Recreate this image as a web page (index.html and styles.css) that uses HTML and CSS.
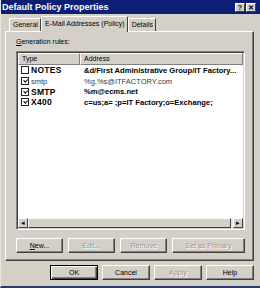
FILE: index.html
```html
<!DOCTYPE html>
<html>
<head>
<meta charset="utf-8">
<link rel="stylesheet" href="styles.css">
</head>
<body>
<div class="window">
  <div class="titlebar">
    <span class="title">Default Policy Properties</span>
    <div class="caption-btns">
      <span class="cbtn">?</span>
      <span class="cbtn">&#x2715;</span>
    </div>
  </div>
  <div class="client">
    <div class="tabs">
      <span class="tab">General</span>
      <span class="tab active">E-Mail Addresses (Policy)</span>
      <span class="tab">Details</span>
    </div>
    <div class="panel">
      <div class="label"><u>G</u>eneration rules:</div>
      <div class="listbox">
        <div class="header">
          <span class="hcol type">Type</span>
          <span class="hcol addr">Address</span>
        </div>
        <div class="rows">
          <div class="row bold">
            <span class="cell type"><span class="chk"></span>NOTES</span>
            <span class="cell addr">&amp;d/First Administrative Group/IT Factory...</span>
          </div>
          <div class="row normal">
            <span class="cell type"><span class="chk on"></span>smtp</span>
            <span class="cell addr">%g.%s@ITFACTORY.com</span>
          </div>
          <div class="row bold">
            <span class="cell type"><span class="chk on"></span>SMTP</span>
            <span class="cell addr">%m@ecms.net</span>
          </div>
          <div class="row bold">
            <span class="cell type"><span class="chk on"></span>X400</span>
            <span class="cell addr">c=us;a= ;p=IT Factory;o=Exchange;</span>
          </div>
        </div>
        <div class="hscroll">
          <span class="sbtn">&#9666;</span>
          <span class="thumb"></span>
          <span class="sbtn">&#9656;</span>
        </div>
      </div>
      <div class="actions">
        <span class="btn w47"><u>N</u>ew...</span>
        <span class="btn w47 disabled">Edit...</span>
        <span class="btn w47 disabled">Remove</span>
        <span class="btn w73 disabled">Set as Primary</span>
      </div>
    </div>
    <div class="footer">
      <span class="btn fb default">OK</span>
      <span class="btn fb">Cancel</span>
      <span class="btn fb disabled">Apply</span>
      <span class="btn fb">Help</span>
    </div>
  </div>
</div>
</body>
</html>
```
FILE: styles.css
```css
* { box-sizing: border-box; }
html, body { margin: 0; padding: 0; background: #d4d0c8; }
.window {
  width: 260px;
  height: 288px;
  background: #d4d0c8;
  font-family: "Liberation Sans", Arial, sans-serif;
  font-size: 7px;
  color: #000;
  border-left: 1px solid #e8e6e0;
  border-bottom: 2px solid #2d3a66;
  overflow: hidden;
}
.titlebar {
  height: 14px;
  background: #0c1f74;
  display: flex;
  align-items: center;
  justify-content: space-between;
  padding: 0 4px 0 1px;
}
.title {
  color: #fff;
  font-weight: bold;
  font-size: 9px;
}
.caption-btns { display: flex; gap: 1px; }
.cbtn {
  width: 10px;
  height: 9px;
  background: #d4d0c8;
  border-top: 1px solid #fff;
  border-left: 1px solid #fff;
  border-right: 1px solid #404040;
  border-bottom: 1px solid #404040;
  font-size: 7px;
  font-weight: bold;
  line-height: 7px;
  text-align: center;
}
.client { padding: 0 6px 0 4px; }
.tabs {
  display: flex;
  align-items: flex-end;
  height: 17px;
  padding-left: 4px;
  position: relative;
  z-index: 1;
}
.tab {
  height: 13px;
  padding: 0 2px 0 3px;
  border-top: 1px solid #fff;
  border-left: 1px solid #fff;
  border-right: 1px solid #404040;
  border-radius: 1px 1px 0 0;
  line-height: 11px;
  background: #d4d0c8;
}
.tab.active {
  height: 16px;
  margin-bottom: -1px;
  line-height: 13px;
}
.panel {
  height: 230px;
  border-top: 1px solid #fff;
  border-left: 1px solid #fff;
  border-right: 1px solid #404040;
  border-bottom: 1px solid #404040;
  box-shadow: inset -1px -1px 0 #808080;
  padding: 5px 7px 0 10px;
}
.label { height: 14px; line-height: 9px; }
.label u, .btn u { text-decoration: underline; }
.listbox {
  width: 229px;
  height: 179px;
  background: #fff;
  border-top: 1px solid #808080;
  border-left: 1px solid #808080;
  border-right: 1px solid #fff;
  border-bottom: 1px solid #fff;
  box-shadow: inset 1px 1px 0 #404040, inset -1px -1px 0 #d4d0c8;
  padding: 1px;
  display: flex;
  flex-direction: column;
}
.header {
  display: flex;
  height: 12px;
}
.hcol {
  background: #d4d0c8;
  border-top: 1px solid #fff;
  border-left: 1px solid #fff;
  border-right: 1px solid #808080;
  border-bottom: 1px solid #808080;
  padding-left: 3px;
  line-height: 9px;
}
.hcol.type { width: 62px; }
.hcol.addr { flex: 1; }
.rows { flex: 1; padding-top: 0; }
.row {
  display: flex;
  height: 10.7px;
  align-items: center;
  white-space: nowrap;
}
.cell.type { width: 62px; display: flex; align-items: center; padding-left: 3px; }
.cell.addr { padding-left: 4px; }
.row.bold .cell.type {
  font-weight: bold;
  font-size: 8.5px;
  letter-spacing: 0.3px;
}
.row.bold .cell.addr { font-weight: bold; font-size: 7.6px; }
.row.normal { color: #3a3a3a; }
.row.normal .cell.type { font-size: 7.5px; }
.row.normal .cell.addr { font-size: 7.5px; }
.chk {
  width: 8px;
  height: 8px;
  border: 1px solid #222;
  background: #fff;
  margin-right: 2px;
  position: relative;
  flex: none;
}
.chk.on::after {
  content: "";
  position: absolute;
  left: 1px;
  top: 0px;
  width: 3px;
  height: 2px;
  border-left: 1.5px solid #000;
  border-bottom: 1.5px solid #000;
  transform: rotate(-45deg) translate(0px, 1px);
}
.hscroll {
  display: flex;
  height: 10px;
  background: #ece9e2;
}
.sbtn {
  width: 10px;
  height: 10px;
  background: #d4d0c8;
  border-top: 1px solid #fff;
  border-left: 1px solid #fff;
  border-right: 1px solid #404040;
  border-bottom: 1px solid #404040;
  font-size: 7px;
  line-height: 8px;
  text-align: center;
}
.thumb {
  flex: 1;
  background: #d4d0c8;
  border-top: 1px solid #fff;
  border-left: 1px solid #fff;
  border-right: 1px solid #404040;
  border-bottom: 1px solid #404040;
  margin-right: 2px;
}
.actions {
  display: flex;
  gap: 5px;
  margin-top: 8px;
}
.btn {
  display: block;
  height: 15px;
  background: #d4d0c8;
  border-top: 1px solid #fff;
  border-left: 1px solid #fff;
  border-right: 1px solid #404040;
  border-bottom: 1px solid #404040;
  box-shadow: inset -1px -1px 0 #808080;
  text-align: center;
  line-height: 13px;
  font-size: 7px;
}
.w47 { width: 47px; }
.w73 { width: 73px; }
.btn.disabled { color: #9a978f; text-shadow: 1px 1px 0 #fff; }
.footer {
  display: flex;
  justify-content: flex-end;
  gap: 4px;
  padding-top: 4px;
}
.fb { width: 48px; }
.btn.default {
  border: 1px solid #000;
  box-shadow: inset 1px 1px 0 #fff, inset -1px -1px 0 #404040, inset -2px -2px 0 #808080;
}
```
